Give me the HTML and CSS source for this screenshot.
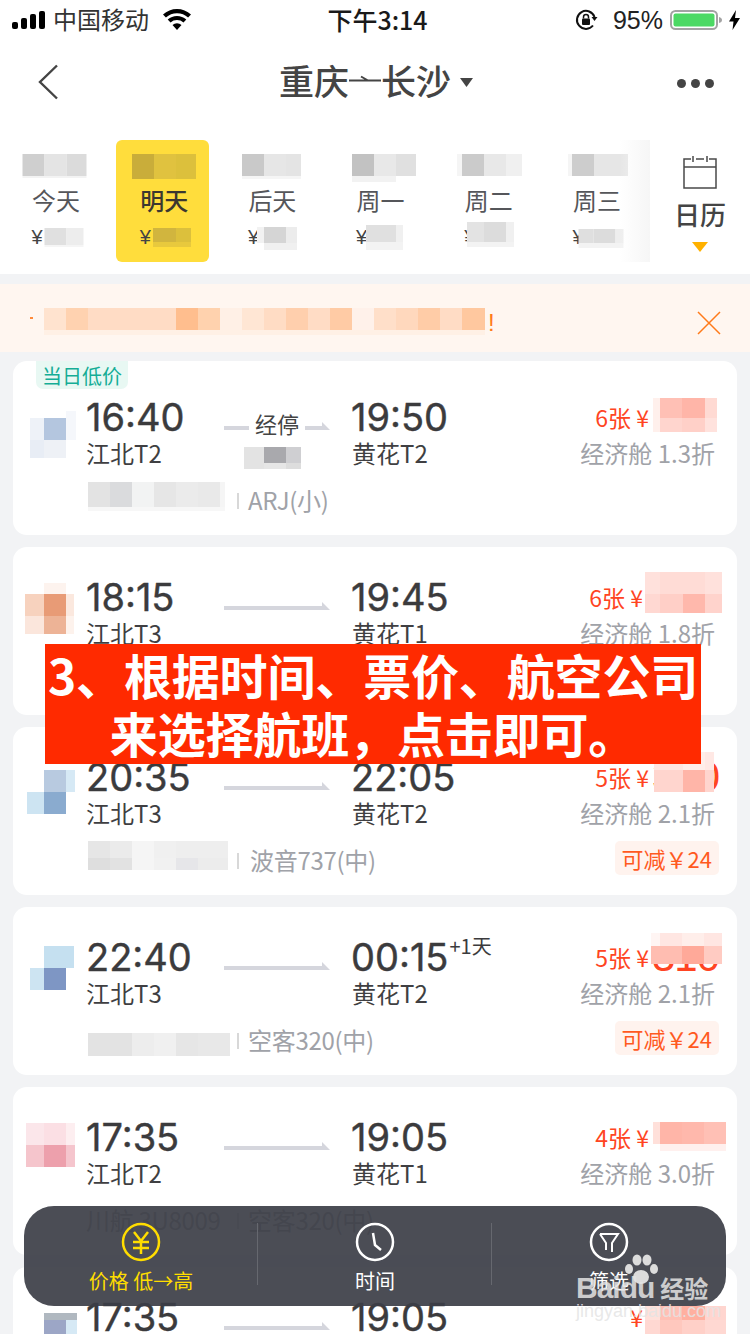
FILE: index.html
```html
<!DOCTYPE html>
<html lang="zh-CN">
<head>
<meta charset="utf-8">
<title>重庆-长沙</title>
<link rel="stylesheet" href="styles.css">
</head>
<body>
<div class="page">
  <header class="top">
    <div class="status">
      <div class="status-left">
        <svg class="signal" width="34" height="18" viewBox="0 0 34 18"><rect x="0" y="11" width="6" height="7" rx="2"/><rect x="9" y="7" width="6" height="11" rx="2"/><rect x="18" y="3" width="6" height="15" rx="2"/><rect x="27" y="0" width="6" height="18" rx="2"/></svg>
        <span>中国移动</span>
        <svg class="wifi" width="28" height="20" viewBox="0 0 28 20"><path d="M14 20l-4.500-5a6.500 6.500 0 0 1 9 0zM7.500 12.500l-2.800-3a14 14 0 0 1 18.600 0l-2.800 3a10 10 0 0 0-13 0zM2.900 7.600L0 4.600a20.500 20.500 0 0 1 28 0l-2.900 3a16.500 16.500 0 0 0-22.200 0z"/></svg>
      </div>
      <div class="status-time">下午3:14</div>
      <div class="status-right">
        <svg class="lock" width="22" height="22" viewBox="0 0 22 22"><path d="M18 16.500A9 9 0 1 1 19.500 8" fill="none" stroke="#111" stroke-width="2"/><path d="M16.500 8h6l-3 4z" fill="#111"/><rect x="7" y="9.500" width="8" height="6.500" rx="1" fill="#111"/><path d="M8.500 9.500V8a2.500 2.500 0 0 1 5 0v1.500" fill="none" stroke="#111" stroke-width="1.500"/></svg>
        <span class="pct">95%</span>
        <svg class="batt" width="53" height="20" viewBox="0 0 53 20"><rect x="1" y="1" width="46" height="18" rx="4.500" fill="none" stroke="#a3a3a3" stroke-width="2"/><rect x="3.500" y="3.500" width="41" height="13" rx="2" fill="#4cd964"/><path d="M49 7c2 .5 3 1.500 3 3s-1 2.500-3 3z" fill="#a3a3a3"/></svg>
        <svg class="bolt" width="11" height="20" viewBox="0 0 11 20"><path d="M7 0L0 11.500h4.500L3.500 20 11 8H6z"/></svg>
      </div>
    </div>
    <nav class="nav">
      <svg class="back" width="20" height="36" viewBox="0 0 20 36"><path d="M19 1.500L2 18l17 16.500" fill="none" stroke="#444" stroke-width="2.400"/></svg>
      <div class="title">
        <span>重庆</span>
        <svg class="title-arrow" width="32" height="14" viewBox="0 0 32 14"><path d="M0 8.500h32M12 4.500l7 4" fill="none" stroke="#444" stroke-width="2"/></svg>
        <span>长沙</span>
        <svg class="caret" width="13" height="9" viewBox="0 0 13 9"><path d="M0 0h13L6.500 9z" fill="#444"/></svg>
      </div>
      <div class="dots"><i></i><i></i><i></i></div>
    </nav>
    <div class="strip">
      <div class="days">
        <div class="day">
          <svg class="m-top" width="93" height="28"><rect x="12.500" y="2" width="22" height="22" fill="#cfcfcf"/><rect x="34.500" y="2" width="22" height="22" fill="#e4e4e4"/><rect x="56.500" y="2" width="20" height="22" fill="#dbdbdb"/><rect x="12.500" y="24" width="64" height="2" fill="#f3f3f3"/></svg>
          <div class="day-name">今天</div>
          <div class="day-price"><span class="yen">¥</span><svg class="m-price" width="60" height="26"><rect x="1.500" y="4" width="22" height="17" fill="#e0e0e0"/><rect x="23.500" y="4" width="17" height="17" fill="#ededed"/><rect x="1.500" y="21" width="39" height="2" fill="#f5f5f5"/></svg></div>
        </div>
        <div class="day day-on">
          <svg class="m-top" width="93" height="28"><rect x="14" y="2" width="22" height="25" fill="#c9ad3a"/><rect x="36" y="2" width="22" height="25" fill="#e0c23f"/><rect x="58" y="2" width="20" height="25" fill="#dcc03c"/></svg>
          <div class="day-name">明天</div>
          <div class="day-price"><span class="yen">¥</span><svg class="m-price" width="60" height="26"><rect x="2" y="4" width="23" height="14" fill="#d1b53e"/><rect x="25" y="4" width="15" height="14" fill="#dcc03c"/><rect x="2" y="18" width="38" height="5" fill="#e8c93d"/></svg></div>
        </div>
        <div class="day">
          <svg class="m-top" width="93" height="28"><rect x="16" y="2" width="22" height="22" fill="#c9c9c9"/><rect x="38" y="2" width="22" height="22" fill="#e6e6e6"/><rect x="60" y="2" width="15" height="22" fill="#e4e4e4"/><rect x="16" y="24" width="59" height="3" fill="#f5f5f5"/></svg>
          <div class="day-name">后天</div>
          <div class="day-price"><span class="yen">¥</span><svg class="m-price" width="60" height="26"><rect x="-2" y="3" width="7" height="16" fill="#f2f2f2"/><rect x="5" y="3" width="22" height="16" fill="#d5d5d5"/><rect x="27" y="3" width="11" height="16" fill="#ececec"/><rect x="5" y="19" width="33" height="7" fill="#f0f0f0"/></svg></div>
        </div>
        <div class="day">
          <svg class="m-top" width="93" height="28"><rect x="18" y="2" width="22" height="22" fill="#c2c2c2"/><rect x="40" y="2" width="22" height="22" fill="#e8e8e8"/><rect x="62" y="2" width="20" height="22" fill="#e0e0e0"/><rect x="18" y="24" width="44" height="6" fill="#f2f2f2"/></svg>
          <div class="day-name">周一</div>
          <div class="day-price"><span class="yen">¥</span><svg class="m-price" width="60" height="26"><rect x="-1" y="1" width="30" height="17" fill="#e0e0e0"/><rect x="29" y="1" width="7" height="17" fill="#f0f0f0"/><rect x="-1" y="18" width="37" height="8" fill="#f3f3f3"/></svg></div>
        </div>
        <div class="day">
          <svg class="m-top" width="93" height="28"><rect x="15" y="2" width="5" height="22" fill="#f5f5f5"/><rect x="20" y="2" width="22" height="22" fill="#cbcbcb"/><rect x="42" y="2" width="22" height="22" fill="#e8e8e8"/><rect x="64" y="2" width="16" height="22" fill="#f0f0f0"/></svg>
          <div class="day-name">周二</div>
          <div class="day-price"><span class="yen">¥</span><svg class="m-price" width="60" height="26"><rect x="-8" y="-2" width="17" height="20" fill="#e3e3e3"/><rect x="9" y="-2" width="22" height="20" fill="#dcdcdc"/><rect x="31" y="-2" width="8" height="20" fill="#f0f0f0"/><rect x="-8" y="18" width="47" height="5" fill="#f3f3f3"/></svg></div>
        </div>
        <div class="day">
          <svg class="m-top" width="93" height="28"><rect x="18" y="2" width="4" height="22" fill="#f5f5f5"/><rect x="22" y="2" width="22" height="22" fill="#cdcdcd"/><rect x="44" y="2" width="34" height="22" fill="#e6e6e6"/></svg>
          <div class="day-name">周三</div>
          <div class="day-price"><span class="yen">¥</span><svg class="m-price" width="60" height="26"><rect x="-4.500" y="5" width="15" height="14" fill="#dfdfdf"/><rect x="10.500" y="5" width="22" height="14" fill="#dcdcdc"/><rect x="32.500" y="5" width="8" height="14" fill="#eeeeee"/><rect x="-4.500" y="19" width="45" height="5" fill="#f3f3f3"/></svg></div>
        </div>
      </div>
      <div class="cal">
        <svg class="cal-icon" width="34" height="34" viewBox="0 0 34 34"><path d="M8 4H1v29h32V4h-7M13 4h8M1 12h32M10 1v6M24 1v6" fill="none" stroke="#4a4a4a" stroke-width="1.500"/></svg>
        <div class="cal-name">日历</div>
        <svg class="cal-tri" width="16" height="10" viewBox="0 0 16 10"><path d="M0 0h16l-8 10z" fill="#ffb100"/></svg>
      </div>
    </div>
  </header>

  <div class="notice">
    <svg class="notice-m" width="458" height="30"><rect x="2" y="9" width="3" height="2" fill="#ff8a3a"/><rect x="16" y="0" width="22" height="22" fill="#ffe3cf"/><rect x="38" y="0" width="22" height="22" fill="#ffd2b0"/><rect x="60" y="0" width="88" height="22" fill="#ffdcc5"/><rect x="148" y="0" width="22" height="22" fill="#ffbe8e"/><rect x="170" y="0" width="22" height="22" fill="#ffd2ae"/><rect x="192" y="0" width="22" height="22" fill="#fff0e6"/><rect x="214" y="0" width="22" height="22" fill="#ffe6d4"/><rect x="236" y="0" width="22" height="22" fill="#ffdcc4"/><rect x="258" y="0" width="22" height="22" fill="#ffcfad"/><rect x="280" y="0" width="22" height="22" fill="#ffdcc5"/><rect x="302" y="0" width="22" height="22" fill="#ffcba5"/><rect x="324" y="0" width="22" height="22" fill="#fff1ea"/><rect x="346" y="0" width="22" height="22" fill="#ffdfc9"/><rect x="368" y="0" width="22" height="22" fill="#ffd8bd"/><rect x="390" y="0" width="22" height="22" fill="#ffcca7"/><rect x="412" y="0" width="22" height="22" fill="#ffdcc5"/><rect x="434" y="0" width="23" height="22" fill="#ffc89f"/><rect x="16" y="22" width="441" height="5" fill="#fff0e5"/></svg>
    <span class="bang">!</span>
    <svg class="close" width="24" height="24" viewBox="0 0 24 24"><path d="M1 1l22 22M23 1L1 23" fill="none" stroke="#ff7a1a" stroke-width="1.500"/></svg>
  </div>

  <main class="list">
    <article class="card card-first">
      <span class="tag">当日低价</span>
      <svg class="logo" width="73" height="76"><rect x="31" y="24" width="22" height="22" fill="#b4c6df"/><rect x="17" y="24" width="14" height="22" fill="#eef2f8"/><rect x="53" y="17" width="10" height="29" fill="#f5f7fb"/><rect x="17" y="46" width="14" height="18" fill="#e8edf5"/><rect x="31" y="46" width="22" height="18" fill="#eef1f6"/></svg>
      <div class="time">16:40</div>
      <div class="route"><svg class="line" width="106" height="8" viewBox="0 0 106 8"><path d="M0 4h98V0l8 8H0z" fill="#d5d6dd"/></svg><span class="stop">经停</span></div>
      <div class="time">19:50</div>
      <div class="price"><span class="left">6张 ¥</span><svg class="m-fare" width="85" height="46"><rect x="1" y="4" width="7" height="34" fill="#fff0ec"/><rect x="8" y="4" width="22" height="20" fill="#ffc0b5"/><rect x="30" y="4" width="23" height="20" fill="#ffb5a8"/><rect x="53" y="4" width="12" height="20" fill="#ffdad3"/><rect x="8" y="24" width="22" height="14" fill="#ffd5ce"/><rect x="30" y="24" width="23" height="14" fill="#ffd0c8"/><rect x="53" y="24" width="12" height="14" fill="#ffe2dd"/></svg></div>
      <div class="port">江北T2</div>
      <div class="port-mid"><svg width="106" height="30"><rect x="20" y="7" width="20" height="22" fill="#e3e3e3"/><rect x="40" y="7" width="22" height="16" fill="#a9a9ad"/><rect x="40" y="23" width="22" height="6" fill="#e6e6e6"/><rect x="62" y="7" width="15" height="16" fill="#cfcfd2"/><rect x="62" y="23" width="15" height="6" fill="#dddddd"/></svg></div>
      <div class="port">黄花T2</div>
      <div class="cabin">经济舱 1.3折</div>
      <div class="info">
        <svg class="m-name" width="144" height="30"><rect x="2" y="-4" width="22" height="25" fill="#e3e3e3"/><rect x="24" y="-4" width="22" height="25" fill="#dadbdd"/><rect x="46" y="-4" width="22" height="25" fill="#f2f3f3"/><rect x="68" y="-4" width="22" height="25" fill="#e6e6e6"/><rect x="90" y="-4" width="22" height="25" fill="#ebebeb"/><rect x="112" y="-4" width="22" height="25" fill="#e9e9e9"/><rect x="134" y="-4" width="5" height="25" fill="#f5f5f5"/><rect x="2" y="21" width="137" height="4" fill="#f7f7f7"/></svg>
        <i class="sep"></i><span>ARJ(小)</span>
      </div>
    </article>

    <article class="card">
      <svg class="logo" width="73" height="76"><rect x="31" y="9" width="22" height="11" fill="#fdf3ee"/><rect x="12" y="20" width="19" height="22" fill="#f7d2be"/><rect x="31" y="20" width="22" height="22" fill="#e89b76"/><rect x="53" y="20" width="8" height="22" fill="#fbe8de"/><rect x="12" y="42" width="19" height="18" fill="#fbe6dc"/><rect x="31" y="42" width="22" height="18" fill="#edb396"/><rect x="53" y="42" width="8" height="18" fill="#fdf2ec"/></svg>
      <div class="time">18:15</div>
      <div class="route"><svg class="line" width="106" height="8" viewBox="0 0 106 8"><path d="M0 4h98V0l8 8H0z" fill="#d5d6dd"/></svg></div>
      <div class="time">19:45</div>
      <div class="price"><span class="left">6张 ¥</span><svg class="m-fare" width="91" height="46"><rect x="-1" y="-2" width="15" height="22" fill="#ffe1dc"/><rect x="14" y="-2" width="45" height="22" fill="#ffdcd6"/><rect x="59" y="-2" width="17" height="22" fill="#ffe1dc"/><rect x="-1" y="20" width="15" height="19" fill="#ffd8d2"/><rect x="14" y="20" width="23" height="19" fill="#ffcfc7"/><rect x="37" y="20" width="22" height="19" fill="#ffb8ac"/><rect x="59" y="20" width="17" height="19" fill="#ffd3cc"/></svg></div>
      <div class="port">江北T3</div>
      <div class="port-mid"></div>
      <div class="port">黄花T1</div>
      <div class="cabin">经济舱 1.8折</div>
    </article>

    <article class="card">
      <svg class="logo" width="73" height="76"><rect x="31" y="16" width="22" height="22" fill="#b8cae0"/><rect x="53" y="16" width="9" height="22" fill="#d6e9f5"/><rect x="14" y="38" width="17" height="22" fill="#cde4f2"/><rect x="31" y="38" width="22" height="22" fill="#8aabcf"/></svg>
      <div class="time">20:35</div>
      <div class="route"><svg class="line" width="106" height="8" viewBox="0 0 106 8"><path d="M0 4h98V0l8 8H0z" fill="#d5d6dd"/></svg></div>
      <div class="time">22:05</div>
      <div class="price"><span class="left">5张 ¥</span><span class="num">310</span><svg class="m-fare" width="85" height="46"><rect x="2" y="-2" width="29" height="18" fill="#ffe6e1"/><rect x="31" y="-2" width="22" height="18" fill="#ffeeea"/><rect x="53" y="-2" width="9" height="18" fill="#ffe8e4"/><rect x="2" y="16" width="29" height="22" fill="#ffd5ce"/><rect x="31" y="16" width="22" height="22" fill="#ffb5a8"/><rect x="53" y="16" width="9" height="22" fill="#ffd5ce"/></svg></div>
      <div class="port">江北T3</div>
      <div class="port-mid"></div>
      <div class="port">黄花T2</div>
      <div class="cabin">经济舱 2.1折</div>
      <div class="info">
        <svg class="m-name" width="144" height="30"><rect x="2" y="-5" width="22" height="17" fill="#e6e6e6"/><rect x="24" y="-5" width="22" height="17" fill="#ebebeb"/><rect x="46" y="-5" width="22" height="17" fill="#f5f5f5"/><rect x="68" y="-5" width="22" height="17" fill="#f0f0f0"/><rect x="90" y="-5" width="52" height="17" fill="#eeeeee"/><rect x="2" y="12" width="22" height="12" fill="#dedede"/><rect x="24" y="12" width="22" height="12" fill="#e2e2e2"/><rect x="46" y="12" width="22" height="12" fill="#f5f5f5"/><rect x="68" y="12" width="22" height="12" fill="#f1f1f1"/><rect x="90" y="12" width="22" height="12" fill="#e6e6e9"/><rect x="112" y="12" width="30" height="12" fill="#ececec"/></svg>
        <i class="sep"></i><span class="plane">波音737(中)</span>
      </div>
      <div class="cut-cell"><span class="cut">可减￥24</span></div>
    </article>

    <article class="card">
      <svg class="logo" width="73" height="76"><rect x="31" y="12" width="30" height="22" fill="#c5e0f0"/><rect x="17" y="34" width="14" height="22" fill="#cde4f2"/><rect x="31" y="34" width="22" height="22" fill="#7e96c4"/></svg>
      <div class="time">22:40</div>
      <div class="route"><svg class="line" width="106" height="8" viewBox="0 0 106 8"><path d="M0 4h98V0l8 8H0z" fill="#d5d6dd"/></svg></div>
      <div class="time">00:15<sup class="plus">+1天</sup></div>
      <div class="price"><span class="left">5张 ¥</span><span class="num">310</span><svg class="m-fare" width="85" height="46"><rect x="-1" y="-1" width="9" height="13" fill="#fff5f3"/><rect x="8" y="-1" width="22" height="13" fill="#ffe6e2"/><rect x="30" y="-1" width="22" height="13" fill="#ffeeea"/><rect x="52" y="-1" width="18" height="13" fill="#ffe6e2"/><rect x="-1" y="12" width="31" height="18" fill="#ffbdb1"/><rect x="30" y="12" width="22" height="18" fill="#ffa999"/><rect x="52" y="12" width="18" height="18" fill="#ffcbc2"/></svg></div>
      <div class="port">江北T3</div>
      <div class="port-mid"></div>
      <div class="port">黄花T2</div>
      <div class="cabin">经济舱 2.1折</div>
      <div class="info">
        <svg class="m-name" width="144" height="30"><rect x="2" y="7" width="44" height="23" fill="#e3e3e3"/><rect x="46" y="7" width="22" height="23" fill="#ededed"/><rect x="68" y="7" width="22" height="23" fill="#f0f0f0"/><rect x="90" y="7" width="22" height="23" fill="#e6e6e6"/><rect x="112" y="7" width="32" height="23" fill="#e8e8e8"/></svg>
        <i class="sep"></i><span>空客320(中)</span>
      </div>
      <div class="cut-cell"><span class="cut">可减￥24</span></div>
    </article>

    <article class="card">
      <svg class="logo" width="73" height="76"><rect x="13" y="9" width="18" height="22" fill="#fbe6ea"/><rect x="31" y="9" width="22" height="22" fill="#fbdfe4"/><rect x="53" y="9" width="9" height="22" fill="#fdeef0"/><rect x="13" y="31" width="18" height="22" fill="#f5c5cc"/><rect x="31" y="31" width="22" height="22" fill="#eda0ac"/><rect x="53" y="31" width="9" height="22" fill="#f5c5cd"/></svg>
      <div class="time">17:35</div>
      <div class="route"><svg class="line" width="106" height="8" viewBox="0 0 106 8"><path d="M0 4h98V0l8 8H0z" fill="#d5d6dd"/></svg></div>
      <div class="time">19:05</div>
      <div class="price"><span class="left">4张 ¥</span><svg class="m-fare" width="85" height="46"><rect x="1" y="8" width="7" height="22" fill="#ffe0da"/><rect x="8" y="8" width="22" height="22" fill="#ffb5a8"/><rect x="30" y="8" width="22" height="22" fill="#ffb8ac"/><rect x="52" y="8" width="22" height="22" fill="#ffc0b5"/><rect x="8" y="30" width="66" height="7" fill="#fff0ee"/></svg></div>
      <div class="port">江北T2</div>
      <div class="port-mid"></div>
      <div class="port">黄花T1</div>
      <div class="cabin">经济舱 3.0折</div>
      <div class="info">
        <span class="carrier">川航 3U8009</span>
        <i class="sep"></i><span>空客320(中)</span>
      </div>
    </article>

    <article class="card">
      <svg class="logo" width="73" height="76"><rect x="31" y="19" width="33" height="7" fill="#b0b8c0"/><rect x="31" y="26" width="22" height="40" fill="#9ca6c6"/><rect x="53" y="26" width="11" height="40" fill="#d6e9f5"/></svg>
      <div class="time">17:35</div>
      <div class="route"><svg class="line" width="106" height="8" viewBox="0 0 106 8"><path d="M0 4h98V0l8 8H0z" fill="#d5d6dd"/></svg></div>
      <div class="time">19:05</div>
      <div class="price"><span class="left">¥</span><svg class="m-fare" width="91" height="46"><rect x="-1" y="12" width="15" height="14" fill="#ffe0da"/><rect x="14" y="12" width="22" height="14" fill="#ffc0b5"/><rect x="36" y="12" width="23" height="14" fill="#ffb0a0"/><rect x="59" y="12" width="21" height="14" fill="#ffd5cf"/><rect x="-1" y="26" width="15" height="20" fill="#ffd8d2"/><rect x="14" y="26" width="22" height="20" fill="#ffc8be"/><rect x="36" y="26" width="23" height="20" fill="#ffd0c8"/><rect x="59" y="26" width="21" height="20" fill="#ffd8d2"/></svg></div>
    </article>
  </main>

  <div class="banner">
    <p>3、根据时间、票价、航空公司</p>
    <p>来选择航班，点击即可。</p>
  </div>

  <div class="sortbar">
    <div class="sort sort-on">
      <svg width="38" height="38" viewBox="0 0 38 38"><circle cx="19" cy="19" r="18" fill="none" stroke="#ffdd00" stroke-width="2.500"/><path d="M12 9l7 9 7-9M11 19h16M11 25h16M19 18v13" fill="none" stroke="#ffdd00" stroke-width="2.500"/></svg>
      <span>价格 低→高</span>
    </div>
    <div class="sort">
      <svg width="38" height="38" viewBox="0 0 38 38"><circle cx="19" cy="19" r="18" fill="none" stroke="#fff" stroke-width="2.500"/><path d="M17 10l2 12 6 5" fill="none" stroke="#fff" stroke-width="2.500"/></svg>
      <span>时间</span>
    </div>
    <div class="sort">
      <svg width="38" height="38" viewBox="0 0 38 38"><circle cx="19" cy="19" r="18" fill="none" stroke="#fff" stroke-width="2.500"/><path d="M10 11h18l-6 9v9M10 11l6 9v7" fill="none" stroke="#fff" stroke-width="2"/></svg>
      <span>筛选</span>
    </div>
  </div>

  <div class="mark">
    <svg class="paw" width="34" height="30" viewBox="0 0 34 30"><g fill="#dcdcdc"><ellipse cx="5" cy="14" rx="4" ry="5"/><ellipse cx="13" cy="5" rx="4.500" ry="5.500"/><ellipse cx="23" cy="5" rx="4.500" ry="5.500"/><ellipse cx="30" cy="14" rx="4" ry="5"/><ellipse cx="17" cy="22" rx="8" ry="7"/></g></svg>
    <div class="mark-row"><b>Bai</b><b class="du">du</b><span>经验</span></div>
    <div class="mark-url">jingyan.baidu.com</div>
  </div>
</div>
</body>
</html>
```
FILE: styles.css
```css
* { box-sizing: border-box; }
html, body { margin: 0; padding: 0; }
body {
  width: 750px;
  height: 1334px;
  overflow: hidden;
  background: #f2f3f5;
  font-family: "Noto Sans CJK SC", "Noto Sans", sans-serif;
  color: #3b3b3d;
}
svg { display: block; overflow: visible; flex: none; }
p { margin: 0; }
.page { position: relative; width: 750px; height: 1334px; overflow: hidden; }

.top { background: #fff; height: 274px; }
.status {
  height: 40px;
  display: grid;
  grid-template-columns: 1fr auto 1fr;
  align-items: center;
  padding: 0 10px 0 12px;
  color: #1a1a1a;
  font-size: 24px;
}
.status-left { display: flex; align-items: center; }
.status-left span { margin-left: 7px; color: #333; line-height: 32px; padding-bottom: 2px; }
.wifi { margin-left: 14px; }
.status-time { font-size: 25px; font-weight: 500; line-height: 32px; padding-bottom: 3px; margin-left: 3px; }
.status-right { display: flex; align-items: center; justify-content: flex-end; }
.pct { font-family: "Liberation Sans", sans-serif; font-size: 25px; margin-left: 16px; color: #222; }
.batt { margin-left: 7px; }
.bolt { margin-left: 6px; }

.nav {
  height: 84px;
  display: grid;
  grid-template-columns: 1fr auto 1fr;
  align-items: center;
  padding: 0 36px 0 38px;
}
.title { display: flex; align-items: center; font-size: 35px; font-weight: 500; line-height: 50px; padding-bottom: 4px; color: #444; }
.title-arrow { margin-top: -2px; }
.caret { margin-left: 9px; margin-top: 4px; }
.dots { display: flex; gap: 5px; justify-content: flex-end; margin-top: 2px; }
.dots i { width: 9px; height: 9px; border-radius: 50%; background: #444; }

.strip { margin-top: 16px; height: 122px; display: flex; }
.days { width: 650px; padding-left: 9.500px; display: flex; gap: 15.200px; }
.day { position: relative; width: 93px; height: 122px; padding-top: 12px; }
.day > * { position: relative; }
.day-on::before {
  content: "";
  position: absolute;
  top: 0; bottom: 0; left: -1.500px; right: 1.500px;
  background: #ffdd3c;
  border-radius: 6px;
}
.m-top { margin-bottom: 3px; }
.day-name { text-align: center; font-size: 24px; line-height: 34px; height: 36px; color: #55565a; }
.day-on .day-name { color: #3b3730; font-weight: 500; }
.day-price { display: flex; height: 26px; margin-top: 5px; padding-left: 22px; }
.yen { width: 11px; font-size: 20px; line-height: 26px; color: #444; font-family: "Liberation Sans", sans-serif; }
.cal { position: relative; width: 100px; display: flex; flex-direction: column; align-items: center; padding-top: 15px; }
.cal::before {
  content: "";
  position: absolute;
  left: -30px; top: 0; bottom: 0; width: 30px;
  background: linear-gradient(to right, rgba(245,245,245,0), #f6f6f6);
}
.cal-name { font-size: 26px; font-weight: 500; line-height: 36px; height: 38px; margin-top: 7px; color: #444; }
.cal-tri { margin-top: 8px; }

.notice {
  margin-top: 10px;
  height: 68px;
  background: #fff6f0;
  display: flex;
  padding: 24px 29px 0 28px;
  align-items: flex-start;
}
.bang { font-size: 24px; line-height: 30px; color: #ff7a1a; margin-left: 2px; font-family: "Liberation Sans", sans-serif; }
.close { margin-left: auto; margin-top: 3px; }

.list { padding: 9px 13px 0; display: flex; flex-direction: column; gap: 12px; }
.card {
  position: relative;
  flex: none;
  height: 168px;
  padding-top: 27px;
  background: #fff;
  border-radius: 14px;
  display: grid;
  grid-template-columns: 73px 138px 128px 218px 167px;
  grid-template-rows: 46px 30px 16px 30px;
  grid-template-areas:
    "logo t1 route t2 price"
    "logo p1 mid p2 cabin"
    ". . . . ."
    ". info info info cut";
  align-items: center;
}
.card-first { height: 174px; padding-top: 33px; }
.tag {
  position: absolute;
  left: 23px; top: 0;
  width: 92px; height: 28px;
  background: #e8f8f3;
  color: #14ad96;
  font-size: 20px;
  line-height: 30px;
  text-align: center;
  border-radius: 0 0 7px 7px;
}
.logo { grid-area: logo; align-self: start; }
.time { font-family: Inter, sans-serif; font-size: 38px; line-height: 46px; color: #3b3b3d; white-space: nowrap; -webkit-text-stroke: 0.4px #3b3b3d; }
.card .time:nth-of-type(1) { grid-area: t1; }
.card > .time + .route + .time { grid-area: t2; margin-left: -1px; }
.plus { font-family: "Noto Sans CJK SC", sans-serif; font-size: 20px; line-height: 1; vertical-align: 17px; margin-left: 1px; -webkit-text-stroke: 0; font-weight: 400; }
.route { grid-area: route; position: relative; height: 46px; padding-top: 28px; }
.stop {
  position: absolute;
  left: 25px; top: 13px;
  background: #fff;
  width: 56px;
  text-align: center;
  font-size: 22px;
  line-height: 32px;
  color: #444;
}
.price { grid-area: price; display: flex; justify-content: flex-end; align-items: center; height: 46px; }
.left { color: #ff4422; font-size: 23px; line-height: 30px; white-space: nowrap; }
.m-fare { margin-left: 3px; }
.num {
  flex: none;
  width: 66px;
  margin-left: 3px;
  margin-right: -69px;
  font-family: "Liberation Sans", sans-serif;
  font-size: 42px;
  line-height: 46px;
  letter-spacing: -1px;
  color: #ff4422;
}
.port { font-size: 24px; line-height: 30px; color: #3f3f42; white-space: nowrap; padding-bottom: 4px; }
.card > .port:nth-of-type(n) { grid-area: p1; }
.card > .port-mid + .port { grid-area: p2; }
.port-mid { grid-area: mid; height: 30px; }
.cabin { grid-area: cabin; font-size: 24px; line-height: 30px; color: #a0a2a8; text-align: right; padding: 0 22px 4px 0; white-space: nowrap; }
.info { grid-area: info; display: flex; align-items: center; height: 30px; font-size: 24px; letter-spacing: -0.3px; color: #a0a2a8; white-space: nowrap; }
.info span { padding-bottom: 4px; }
.carrier { width: 144px; overflow: visible; }
.sep { flex: none; width: 2px; height: 16px; background: #d8d8d8; margin: 0 9px 0 7px; }
.plane { margin-left: 2px; }
.cut-cell { grid-area: cut; display: flex; justify-content: flex-end; padding-right: 18px; }
.cut { background: #fff3ee; color: #ff5a1f; font-size: 22px; line-height: 34px; padding: 0 7px; border-radius: 5px; white-space: nowrap; margin-top: -6px; }

.banner {
  position: absolute;
  left: 45px; top: 644px;
  width: 656px; height: 120px;
  background: #ff2a00;
  color: #fff;
  font-size: 48px;
  font-weight: 700;
  line-height: 58px;
  text-align: center;
  white-space: nowrap;
  letter-spacing: -0.15px;
  padding-top: 1px;
}

.sortbar {
  position: absolute;
  left: 24px; top: 1206px;
  width: 702px; height: 100px;
  border-radius: 30px;
  background: rgba(60, 62, 70, 0.92);
  display: grid;
  grid-template-columns: repeat(3, 234px);
  align-items: start;
  padding-top: 17px;
}
.sort {
  display: flex;
  flex-direction: column;
  align-items: center;
  height: 62px;
  color: #fff;
  font-size: 20px;
  line-height: 28px;
  gap: 6px;
  white-space: nowrap;
}
.sort + .sort { border-left: 1px solid #66686f; margin-left: -1px; }
.sort-on { color: #ffdd00; }

.mark { position: absolute; left: 576px; top: 1255px; width: 140px; color: rgba(228, 228, 228, 0.85); }
.paw { margin-left: 48px; margin-bottom: -10px; }
.mark-row { display: flex; align-items: center; height: 26px; line-height: 26px; font-size: 30px; font-family: "Liberation Sans", sans-serif; }
.mark-row b { letter-spacing: -1px; }
.mark-row span { margin-left: 6px; font-family: "Noto Sans CJK SC", sans-serif; font-size: 24px; font-weight: 700; }
.mark-url { font-family: "Liberation Sans", sans-serif; font-size: 18px; line-height: 20px; margin-top: 0; }
```
